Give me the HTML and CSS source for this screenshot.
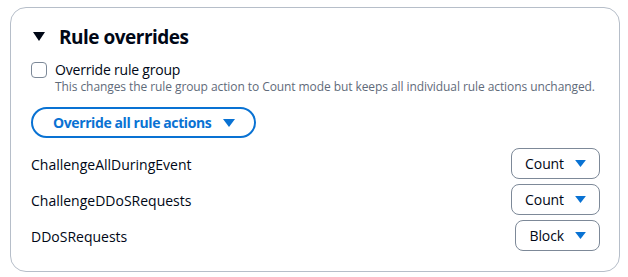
FILE: index.html
```html
<!DOCTYPE html>
<html>
<head>
<meta charset="utf-8">
<link rel="stylesheet" href="styles.css">
</head>
<body>
<div class="panel">
  <div class="heading">
    <svg class="caret" width="12" height="10" viewBox="0 0 12 10"><path d="M0 0 H12 L6 9 Z" fill="#000716"/></svg>
    <span>Rule overrides</span>
  </div>
  <div class="check-row">
    <span class="box"></span>
    <div class="check-text">
      <div class="check-label">Override rule group</div>
      <div class="check-desc">This changes the rule group action to Count mode but keeps all individual rule actions unchanged.</div>
    </div>
  </div>
  <div class="btn-row">
    <button class="btn-primary">Override all rule actions <svg width="12" height="10" viewBox="0 0 12 10"><path d="M0 1 H12 L6 9 Z" fill="#0972d3"/></svg></button>
  </div>
  <div class="rules">
    <div class="rule"><span class="name">ChallengeAllDuringEvent</span><button class="select">Count <svg width="11" height="9" viewBox="0 0 12 10"><path d="M0 1 H12 L6 9 Z" fill="#0972d3"/></svg></button></div>
    <div class="rule"><span class="name">ChallengeDDoSRequests</span><button class="select">Count <svg width="11" height="9" viewBox="0 0 12 10"><path d="M0 1 H12 L6 9 Z" fill="#0972d3"/></svg></button></div>
    <div class="rule"><span class="name">DDoSRequests</span><button class="select">Block <svg width="11" height="9" viewBox="0 0 12 10"><path d="M0 1 H12 L6 9 Z" fill="#0972d3"/></svg></button></div>
  </div>
</div>
</body>
</html>
```
FILE: styles.css
```css
* { box-sizing: border-box; }
body {
  margin: 0;
  padding: 7px 8px 5px 10px;
  background: #fff;
  font-family: "Open Sans", "Noto Sans", sans-serif;
  color: #000716;
}
.panel {
  border: 1px solid #b6bec9;
  border-radius: 16px;
  height: 265px;
  padding: 18px 19px 0 20px;
}
.heading {
  display: flex;
  align-items: center;
  gap: 14px;
  padding-left: 2px;
  height: 22px;
}
.heading span {
  font-size: 19px;
  font-weight: 700;
  letter-spacing: -0.5px;
}
.check-row {
  display: flex;
  gap: 8px;
  margin-top: 14px;
}
.box {
  width: 16px;
  height: 16px;
  border: 1.5px solid #7d8998;
  border-radius: 4px;
  flex: none;
}
.check-label {
  font-size: 14px;
  line-height: 16px;
  letter-spacing: -0.2px;
}
.check-desc {
  font-size: 12px;
  line-height: 18px;
  letter-spacing: -0.08px;
  color: #5f6b7a;
}
.btn-row { margin-top: 11px; }
.btn-primary {
  display: inline-flex;
  align-items: center;
  gap: 12px;
  height: 31px;
  padding: 0 19px 0 20px;
  border: 2px solid #0972d3;
  border-radius: 20px;
  background: #fff;
  color: #0972d3;
  font-family: inherit;
  font-size: 14px;
  font-weight: 700;
  letter-spacing: -0.4px;
}
.rules {
  margin-top: 10px;
  display: flex;
  flex-direction: column;
  gap: 5px;
}
.rule {
  display: flex;
  justify-content: space-between;
  align-items: center;
  height: 31px;
}
.name { font-size: 14px; padding-top: 2px; }
.select {
  display: inline-flex;
  align-items: center;
  gap: 11px;
  height: 31px;
  padding: 0 13px 0 13px;
  border: 1px solid #7d8998;
  border-radius: 8px;
  background: #fff;
  color: #000716;
  font-family: inherit;
  font-size: 14px;
  letter-spacing: -0.1px;
}
```
